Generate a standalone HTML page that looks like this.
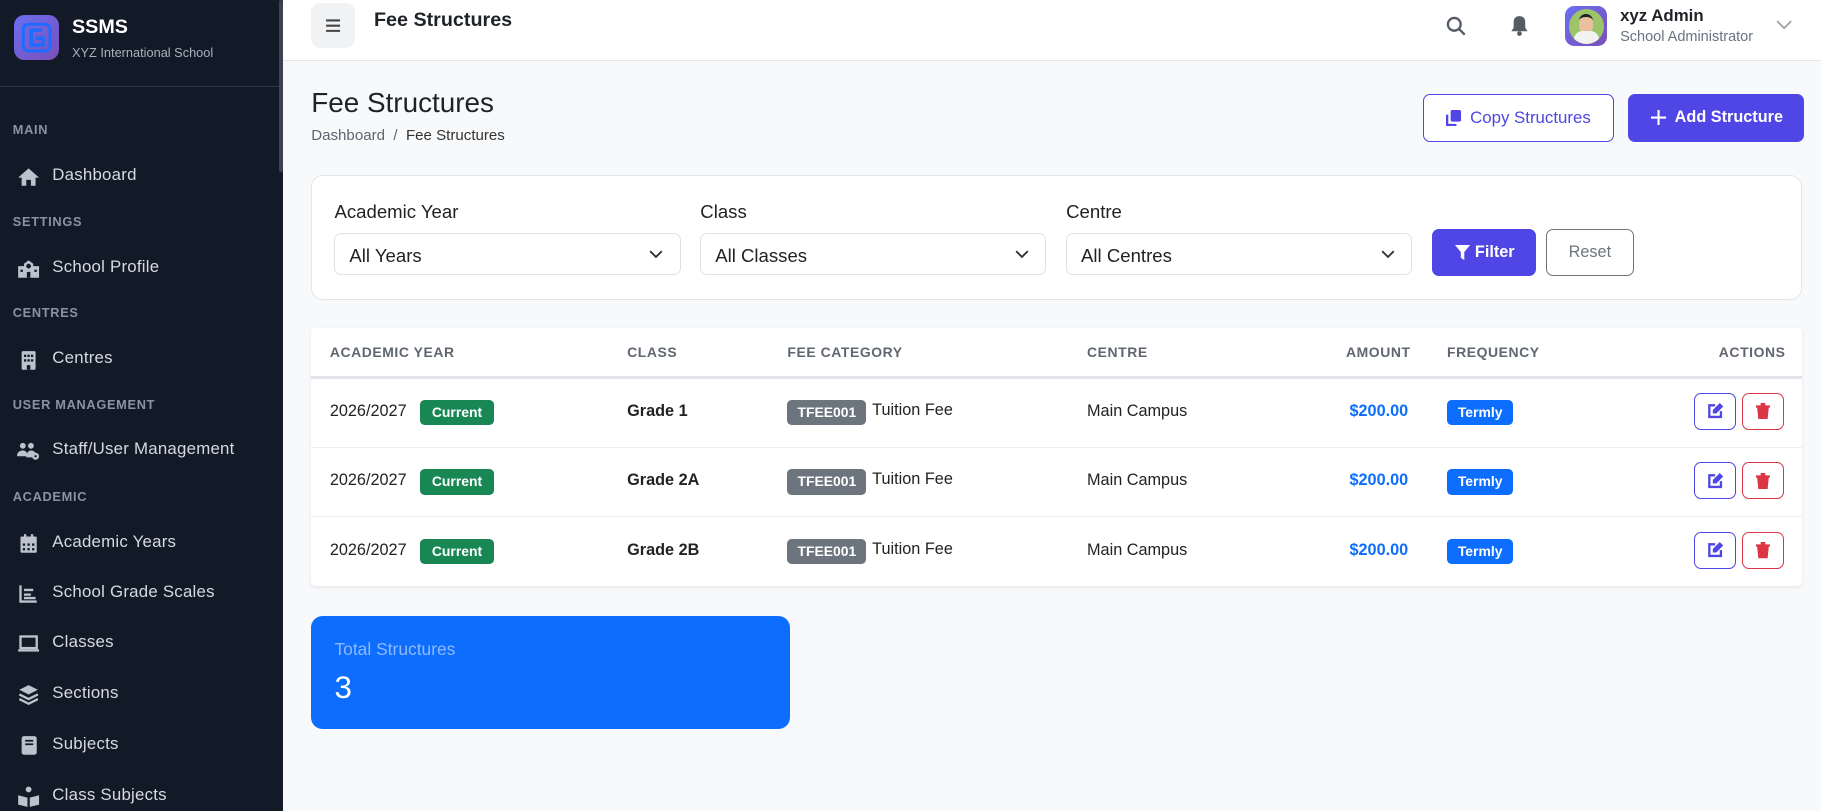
<!DOCTYPE html>
<html><head><meta charset="utf-8">
<style>
html,body{margin:0;padding:0;width:1821px;height:811px;overflow:hidden;background:#f8f9fb;font-family:"Liberation Sans",sans-serif;}
#w{zoom:1.16135;width:1568px;height:698px;position:relative;overflow:hidden;}
.a{position:absolute;white-space:nowrap;}
.sb{position:absolute;left:0;top:0;width:244px;height:698px;background:#121927;}
.sec{position:absolute;left:11px;font-size:11px;font-weight:bold;color:#8b93a3;letter-spacing:.6px;line-height:14px;}
.it{position:absolute;left:45px;font-size:14.5px;color:#d5dae2;line-height:18px;letter-spacing:.2px;}
.ic{position:absolute;left:15px;width:20px;height:18px;}
.lbl{font-size:16px;color:#222;line-height:20px;}
.sel{position:absolute;top:201px;height:36px;width:298px;border:1px solid #dee2e6;border-radius:6px;background:#fff;box-sizing:border-box;}
.sel span{position:absolute;left:12px;top:9px;font-size:16px;color:#222;}
.sel svg{position:absolute;right:14px;top:13px;}
.th{position:absolute;top:296px;font-size:12px;font-weight:bold;color:#5f6670;letter-spacing:.5px;}
.row{position:absolute;left:268px;width:1284px;height:1px;background:#eceef1;}
.td{position:absolute;font-size:14px;color:#222;line-height:18px;}
.bg{position:absolute;border-radius:4px;color:#fff;font-size:12px;font-weight:bold;line-height:22px;height:22px;text-align:center;}
.ab{position:absolute;width:36px;height:32px;border-radius:6px;box-sizing:border-box;background:#fff;}
</style></head><body><div id="w">
<div class="sb">
 <div class="a" style="left:240px;top:0;width:4px;height:148px;background:#3b4250;border-radius:2px"></div>
 <div class="a" style="left:12px;top:13px;width:39px;height:39px;border-radius:9px;background:linear-gradient(135deg,#6a6ff0,#7a4fb8)">
  <svg width="39" height="39" viewBox="0 0 39 39"><rect x="8" y="8" width="23" height="23" rx="4" fill="none" stroke="#1e6bff" stroke-width="2.5"/><path d="M24 13h-9v13h10v-6h-6" fill="none" stroke="#1e6bff" stroke-width="3"/></svg>
 </div>
 <div class="a" style="left:62px;top:14px;font-size:17px;font-weight:bold;color:#fff">SSMS</div>
 <div class="a" style="left:62px;top:39px;font-size:11px;color:#aab1bd">XYZ International School</div>
 <div class="a" style="left:0;top:74px;width:240px;height:1px;background:#2f3747"></div>
 <div class="sec" style="top:105px">MAIN</div>
 <svg class="ic" style="top:143px" viewBox="0 0 20 18"><path d="M10 2L1 10h3v7h4v-5h4v5h4v-7h3z" fill="#bcc3ce"/></svg>
 <div class="it" style="top:142px">Dashboard</div>
 <div class="sec" style="top:184px">SETTINGS</div>
 <svg class="ic" style="top:222px" viewBox="0 0 20 18"><path d="M1 7h5V5l4-3 4 3v2h5v10H1z" fill="#bcc3ce"/><circle cx="10" cy="7" r="2" fill="#121927"/><rect x="3" y="10" width="2" height="2" fill="#121927"/><rect x="15" y="10" width="2" height="2" fill="#121927"/><rect x="8.5" y="12" width="3" height="5" fill="#121927"/></svg>
 <div class="it" style="top:221px">School Profile</div>
 <div class="sec" style="top:263px">CENTRES</div>
 <svg class="ic" style="top:301px" viewBox="0 0 20 18"><rect x="4" y="1" width="12" height="16" rx="1" fill="#bcc3ce"/><g fill="#121927"><rect x="6" y="4" width="2" height="2"/><rect x="9" y="4" width="2" height="2"/><rect x="12" y="4" width="2" height="2"/><rect x="6" y="8" width="2" height="2"/><rect x="9" y="8" width="2" height="2"/><rect x="12" y="8" width="2" height="2"/><rect x="8.5" y="13" width="3" height="4"/></g></svg>
 <div class="it" style="top:300px">Centres</div>
 <div class="sec" style="top:342px">USER MANAGEMENT</div>
 <svg class="ic" style="top:379px" viewBox="0 0 20 18"><circle cx="5" cy="5" r="2.5" fill="#bcc3ce"/><circle cx="12" cy="5" r="2.5" fill="#bcc3ce"/><path d="M0 14c0-4 3-5 5-5s4 1 4 5zM8 15c0-4 2-6 4-6s3 1 4 2v4z" fill="#bcc3ce"/><circle cx="16" cy="14" r="3" fill="#bcc3ce"/><circle cx="16" cy="14" r="1" fill="#121927"/></svg>
 <div class="it" style="top:378px">Staff/User Management</div>
 <div class="sec" style="top:421px">ACADEMIC</div>
 <svg class="ic" style="top:459px" viewBox="0 0 20 18"><rect x="3" y="3" width="14" height="14" rx="1" fill="#bcc3ce"/><rect x="6" y="1" width="2" height="3" fill="#bcc3ce"/><rect x="12" y="1" width="2" height="3" fill="#bcc3ce"/><g fill="#121927"><rect x="5" y="9" width="2" height="2"/><rect x="9" y="9" width="2" height="2"/><rect x="13" y="9" width="2" height="2"/><rect x="5" y="13" width="2" height="2"/><rect x="9" y="13" width="2" height="2"/><rect x="13" y="13" width="2" height="2"/></g></svg>
 <div class="it" style="top:458px">Academic Years</div>
 <svg class="ic" style="top:502px" viewBox="0 0 20 18"><path d="M3 2v14h14" fill="none" stroke="#bcc3ce" stroke-width="2"/><path d="M6 6h8M6 10h6M6 13h10" stroke="#bcc3ce" stroke-width="2"/></svg>
 <div class="it" style="top:501px">School Grade Scales</div>
 <svg class="ic" style="top:545px" viewBox="0 0 20 18"><rect x="3" y="3" width="14" height="10" fill="none" stroke="#bcc3ce" stroke-width="2"/><rect x="1" y="14" width="18" height="2" fill="#bcc3ce"/></svg>
 <div class="it" style="top:544px">Classes</div>
 <svg class="ic" style="top:589px" viewBox="0 0 20 18"><path d="M10 1l8 4-8 4-8-4z" fill="#bcc3ce"/><path d="M2 9l8 4 8-4M2 13l8 4 8-4" fill="none" stroke="#bcc3ce" stroke-width="2"/></svg>
 <div class="it" style="top:588px">Sections</div>
 <svg class="ic" style="top:633px" viewBox="0 0 20 18"><rect x="4" y="1" width="13" height="16" rx="2" fill="#bcc3ce"/><path d="M7 5h7M7 8h7" stroke="#121927" stroke-width="1.5"/></svg>
 <div class="it" style="top:632px">Subjects</div>
 <svg class="ic" style="top:677px" viewBox="0 0 20 18"><circle cx="10" cy="3" r="2.5" fill="#bcc3ce"/><path d="M1 8l8 2v8l-8-2zM19 8l-8 2v8l8-2z" fill="#bcc3ce"/></svg>
 <div class="it" style="top:676px">Class Subjects</div>
</div>

<div class="a" style="left:244px;top:0;width:1324px;height:52px;background:#fff;border-bottom:1px solid #e4e6ea"></div>
<div class="a" style="left:268px;top:3px;width:38px;height:38px;background:#f0f2f4;border-radius:8px">
 <svg width="38" height="38"><path d="M13 15h12M13 19.5h12M13 24h12" stroke="#444" stroke-width="1.8"/></svg></div>
<div class="a" style="left:322px;top:8px;font-size:17px;font-weight:bold;color:#1f2328">Fee Structures</div>
<svg class="a" style="left:1244px;top:13px" width="20" height="20" viewBox="0 0 20 20"><circle cx="8" cy="8" r="5.5" fill="none" stroke="#555c66" stroke-width="2"/><path d="M12 12l5 5" stroke="#555c66" stroke-width="2"/></svg>
<svg class="a" style="left:1299px;top:13px" width="18" height="19" viewBox="0 0 18 19"><path d="M9 1c-3 0-5 2-5 5v5l-2 3h14l-2-3V6c0-3-2-5-5-5z" fill="#555c66"/><circle cx="9" cy="16" r="2" fill="#555c66"/></svg>
<div class="a" style="left:1348px;top:5px;width:36px;height:35px;border-radius:8px;background:linear-gradient(135deg,#6a6ff0,#7a4fb8)">
 <div class="a" style="left:3px;top:3px;width:30px;height:30px;border-radius:50%;background:#9cc56a;overflow:hidden"><div class="a" style="left:9px;top:4px;width:12px;height:14px;border-radius:6px;background:#e8c0a0;border-top:3px solid #222"></div><div class="a" style="left:4px;top:19px;width:22px;height:14px;border-radius:8px;background:#f2f2f0"></div></div></div>
<div class="a" style="left:1395px;top:5px;font-size:14.5px;font-weight:bold;color:#1f2328">xyz Admin</div>
<div class="a" style="left:1395px;top:25px;font-size:12.5px;color:#6b7280">School Administrator</div>
<svg class="a" style="left:1529px;top:17px" width="14" height="9"><path d="M1 1l6 6 6-6" fill="none" stroke="#9aa0a8" stroke-width="1.5"/></svg>

<div class="a" style="left:268px;top:75px;font-size:24px;color:#1f2328">Fee Structures</div>
<div class="a" style="left:268px;top:109px;font-size:13px;color:#5f6670">Dashboard &nbsp;/&nbsp; <span style="color:#333">Fee Structures</span></div>
<div class="a" style="left:1225px;top:81px;width:165px;height:41px;box-sizing:border-box;border:1px solid #4f46e5;border-radius:6px;background:#fff;color:#4f46e5;font-size:14.5px;line-height:39px">
 <svg style="position:absolute;left:19px;top:13px" width="13" height="14" viewBox="0 0 13 14"><rect x="4" y="0" width="9" height="10" rx="1.5" fill="#4f46e5"/><path d="M1 4v9h8" fill="none" stroke="#4f46e5" stroke-width="2"/></svg>
 <span style="position:absolute;left:40px">Copy Structures</span></div>
<div class="a" style="left:1402px;top:81px;width:151px;height:41px;border-radius:6px;background:#4f46e5;color:#fff;font-size:14px;font-weight:bold;line-height:41px">
 <svg style="position:absolute;left:20px;top:14px" width="13" height="13"><path d="M6.5 0v13M0 6.5h13" stroke="#fff" stroke-width="1.8"/></svg>
 <span style="position:absolute;left:40px">Add Structure</span></div>

<div class="a" style="left:268px;top:151px;width:1284px;height:107px;box-sizing:border-box;background:#fff;border:1px solid #e4e6ea;border-radius:10px"></div>
<div class="a lbl" style="left:288px;top:172px">Academic Year</div>
<div class="a lbl" style="left:603px;top:172px">Class</div>
<div class="a lbl" style="left:918px;top:172px">Centre</div>
<div class="sel" style="left:288px"><span>All Years</span><svg width="12" height="8"><path d="M1 1l5 5 5-5" fill="none" stroke="#333" stroke-width="1.6"/></svg></div>
<div class="sel" style="left:603px"><span>All Classes</span><svg width="12" height="8"><path d="M1 1l5 5 5-5" fill="none" stroke="#333" stroke-width="1.6"/></svg></div>
<div class="sel" style="left:918px"><span>All Centres</span><svg width="12" height="8"><path d="M1 1l5 5 5-5" fill="none" stroke="#333" stroke-width="1.6"/></svg></div>
<div class="a" style="left:1233px;top:197px;width:90px;height:41px;border-radius:6px;background:#4f46e5;color:#fff;font-size:14px;font-weight:bold;line-height:41px">
 <svg style="position:absolute;left:20px;top:14px" width="13" height="13"><path d="M0 0h13L8 6v7L5 11V6z" fill="#fff"/></svg><span style="position:absolute;left:37px">Filter</span></div>
<div class="a" style="left:1331px;top:197px;width:76px;height:41px;box-sizing:border-box;border:1px solid #6c757d;border-radius:6px;background:#fff;color:#6c757d;font-size:14px;line-height:39px;text-align:center">Reset</div>

<div class="a" style="left:268px;top:282px;width:1284px;height:223px;background:#fff;box-shadow:0 1px 3px rgba(0,0,0,.08);border-radius:4px"></div>
<div class="th" style="left:284px">ACADEMIC YEAR</div>
<div class="th" style="left:540px">CLASS</div>
<div class="th" style="left:678px">FEE CATEGORY</div>
<div class="th" style="left:936px">CENTRE</div>
<div class="th" style="left:1159px">AMOUNT</div>
<div class="th" style="left:1246px">FREQUENCY</div>
<div class="th" style="left:1480px">ACTIONS</div>
<div class="row" style="top:324px;height:2px;background:#e3e5ea"></div>
<div class="row" style="top:385px"></div>
<div class="row" style="top:444px"></div>

<div class="td" style="left:284px;top:345px">2026/2027</div><div class="bg" style="left:362px;top:344px;width:63px;background:#198754">Current</div>
<div class="td" style="left:540px;top:345px;font-weight:bold">Grade 1</div>
<div class="bg" style="left:678px;top:344px;width:68px;background:#6c757d">TFEE001</div><div class="td" style="left:751px;top:344px">Tuition Fee</div>
<div class="td" style="left:936px;top:345px">Main Campus</div>
<div class="td" style="left:1162px;top:345px;font-weight:bold;color:#0d6efd">$200.00</div>
<div class="bg" style="left:1246px;top:344px;width:57px;background:#0d6efd">Termly</div>
<div class="ab" style="left:1459px;top:338px;border:1px solid #4f46e5"></div><div class="ab" style="left:1500px;top:338px;border:1px solid #dc3545"></div>

<div class="td" style="left:284px;top:405px">2026/2027</div><div class="bg" style="left:362px;top:404px;width:63px;background:#198754">Current</div>
<div class="td" style="left:540px;top:405px;font-weight:bold">Grade 2A</div>
<div class="bg" style="left:678px;top:404px;width:68px;background:#6c757d">TFEE001</div><div class="td" style="left:751px;top:404px">Tuition Fee</div>
<div class="td" style="left:936px;top:405px">Main Campus</div>
<div class="td" style="left:1162px;top:405px;font-weight:bold;color:#0d6efd">$200.00</div>
<div class="bg" style="left:1246px;top:404px;width:57px;background:#0d6efd">Termly</div>
<div class="ab" style="left:1459px;top:398px;border:1px solid #4f46e5"></div><div class="ab" style="left:1500px;top:398px;border:1px solid #dc3545"></div>

<div class="td" style="left:284px;top:465px">2026/2027</div><div class="bg" style="left:362px;top:464px;width:63px;background:#198754">Current</div>
<div class="td" style="left:540px;top:465px;font-weight:bold">Grade 2B</div>
<div class="bg" style="left:678px;top:464px;width:68px;background:#6c757d">TFEE001</div><div class="td" style="left:751px;top:464px">Tuition Fee</div>
<div class="td" style="left:936px;top:465px">Main Campus</div>
<div class="td" style="left:1162px;top:465px;font-weight:bold;color:#0d6efd">$200.00</div>
<div class="bg" style="left:1246px;top:464px;width:57px;background:#0d6efd">Termly</div>
<div class="ab" style="left:1459px;top:458px;border:1px solid #4f46e5"></div><div class="ab" style="left:1500px;top:458px;border:1px solid #dc3545"></div>

<svg class="a" style="left:1470px;top:347px" width="14" height="14" viewBox="0 0 14 14"><path d="M7 2H2v10h10V7" fill="none" stroke="#4f46e5" stroke-width="2"/><path d="M11 0l3 3-6 6H5V6z" fill="#4f46e5"/></svg>
<svg class="a" style="left:1470px;top:407px" width="14" height="14" viewBox="0 0 14 14"><path d="M7 2H2v10h10V7" fill="none" stroke="#4f46e5" stroke-width="2"/><path d="M11 0l3 3-6 6H5V6z" fill="#4f46e5"/></svg>
<svg class="a" style="left:1470px;top:467px" width="14" height="14" viewBox="0 0 14 14"><path d="M7 2H2v10h10V7" fill="none" stroke="#4f46e5" stroke-width="2"/><path d="M11 0l3 3-6 6H5V6z" fill="#4f46e5"/></svg>
<svg class="a" style="left:1512px;top:347px" width="12" height="14" viewBox="0 0 12 14"><path d="M0 2h12v2H0zM4 0h4v2H4zM1 4h10l-1 10H2z" fill="#dc3545"/></svg>
<svg class="a" style="left:1512px;top:407px" width="12" height="14" viewBox="0 0 12 14"><path d="M0 2h12v2H0zM4 0h4v2H4zM1 4h10l-1 10H2z" fill="#dc3545"/></svg>
<svg class="a" style="left:1512px;top:467px" width="12" height="14" viewBox="0 0 12 14"><path d="M0 2h12v2H0zM4 0h4v2H4zM1 4h10l-1 10H2z" fill="#dc3545"/></svg>

<div class="a" style="left:268px;top:530px;width:412px;height:98px;background:#0d6efd;border-radius:10px"></div>
<div class="a" style="left:288px;top:550px;font-size:15px;color:#8fb8ff">Total Structures</div>
<div class="a" style="left:288px;top:577px;font-size:27px;color:#fff">3</div>
</div></body></html>
